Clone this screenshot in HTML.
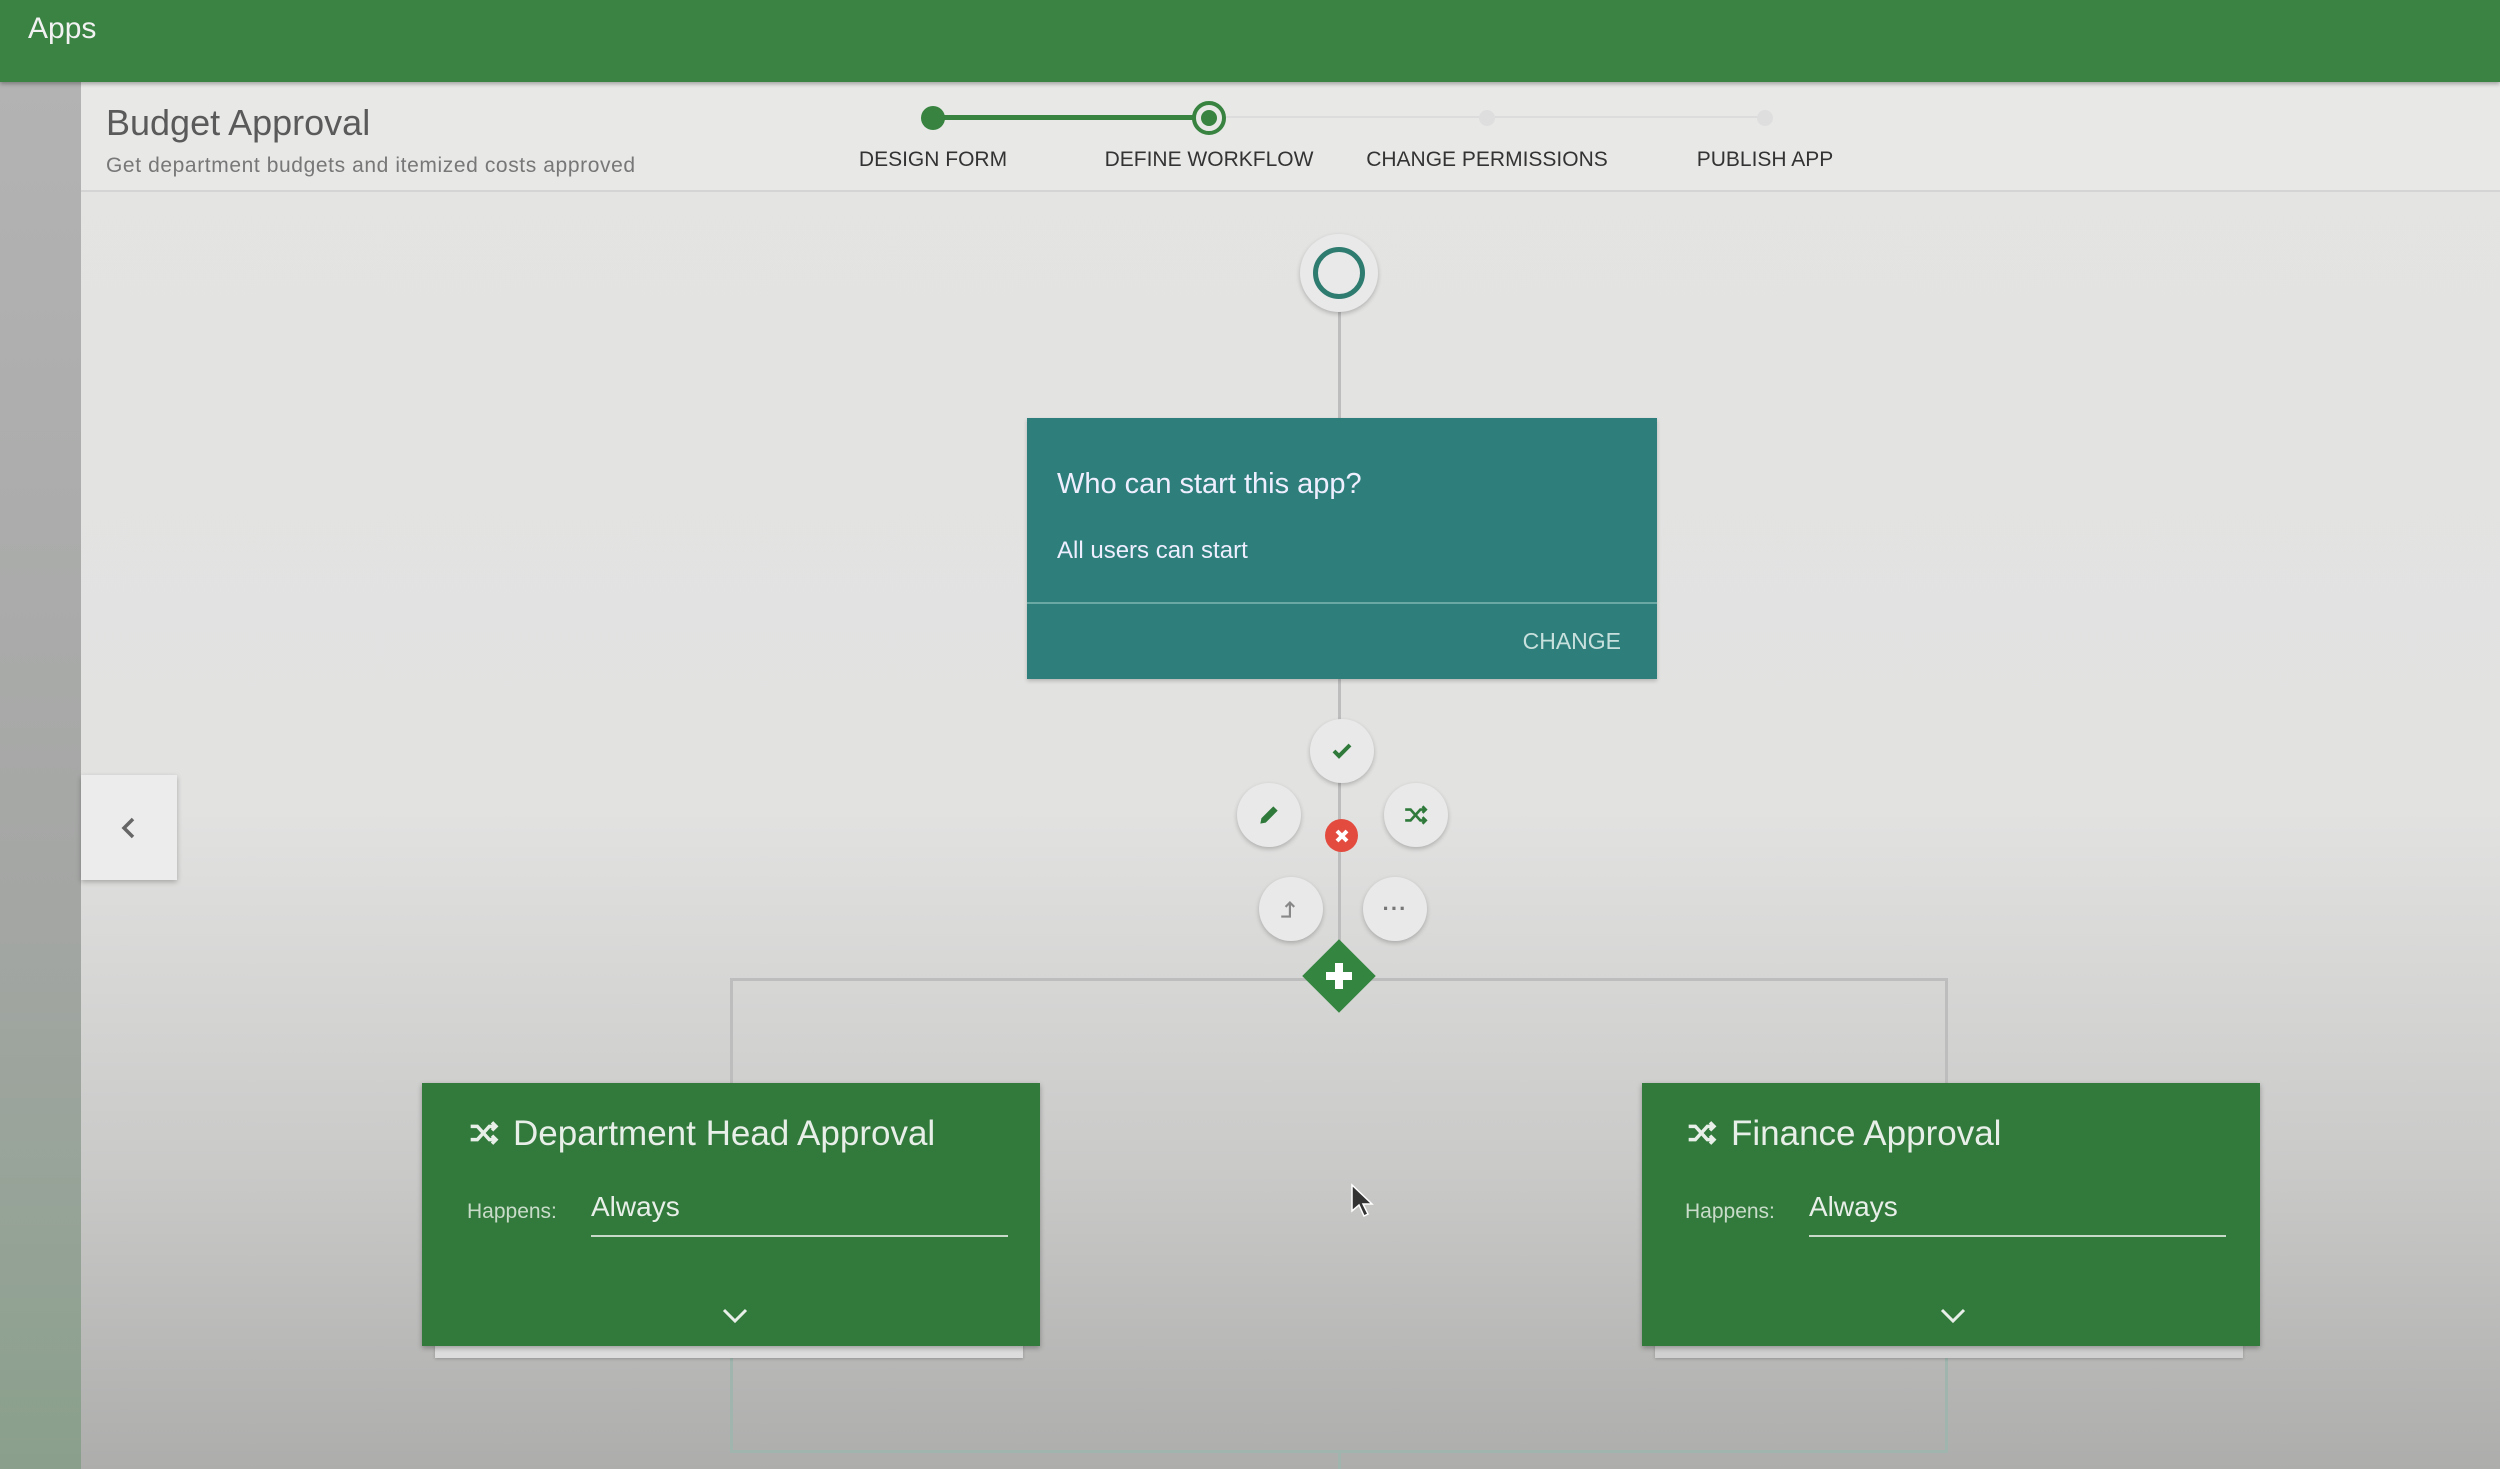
<!DOCTYPE html>
<html><head><meta charset="utf-8"><style>
*{margin:0;padding:0;box-sizing:border-box}
body{width:2500px;height:1469px;overflow:hidden;font-family:"Liberation Sans",sans-serif;position:relative;background:linear-gradient(#e4e4e3 0%,#e2e2e1 55%,#c9c9c8 80%,#adadac 100%)}
.abs{position:absolute}
#top{left:0;top:0;width:2500px;height:82px;background:#3a8343;box-shadow:0 2px 4px rgba(0,0,0,.3);z-index:3}
#left{left:0;top:82px;width:81px;height:1387px;background:linear-gradient(#b3b3b3,#a4a6a4 60%,#8aa08c)}
#hdr{left:81px;top:82px;width:2419px;height:110px;background:#e8e8e7;border-bottom:2px solid #d4d4d4}
.lbl{position:absolute;top:148px;font-size:21px;color:#333;width:300px;margin-left:-150px;text-align:center}
.line{position:absolute;background:#bdbdbd}
.fab{position:absolute;border-radius:50%;background:#e9e9e9;box-shadow:0 2px 5px rgba(0,0,0,.22);display:flex;align-items:center;justify-content:center}
.card{position:absolute;background:#32793c;box-shadow:0 2px 5px rgba(0,0,0,.3);color:#e8efe8}
</style></head><body>
<div id="top" class="abs"><div class="abs" style="left:28px;top:12px;font-size:30px;color:#f2f2f2">Apps</div></div>
<div id="left" class="abs"></div>
<div id="hdr" class="abs">
<div class="abs" style="left:25px;top:20px;font-size:36px;color:#5a5a5a">Budget Approval</div>
<div class="abs" style="left:25px;top:72px;font-size:21px;color:#777;letter-spacing:0.6px">Get department budgets and itemized costs approved</div>
</div>
<div class="abs" style="left:933px;top:116px;width:832px;height:2px;background:#dcdcdc"></div>
<div class="abs" style="left:933px;top:115px;width:276px;height:5px;background:#37833f"></div>
<div class="abs" style="left:921px;top:106px;width:24px;height:24px;border-radius:50%;background:#37833f"></div>
<div class="abs" style="left:1192px;top:101px;width:34px;height:34px;border-radius:50%;border:4px solid #37833f;background:#e8e8e7"></div>
<div class="abs" style="left:1201px;top:110px;width:16px;height:16px;border-radius:50%;background:#37833f"></div>
<div class="abs" style="left:1479px;top:110px;width:16px;height:16px;border-radius:50%;background:#dedede"></div>
<div class="abs" style="left:1757px;top:110px;width:16px;height:16px;border-radius:50%;background:#dedede"></div>
<div class="lbl" style="left:933px">DESIGN FORM</div>
<div class="lbl" style="left:1209px">DEFINE WORKFLOW</div>
<div class="lbl" style="left:1487px">CHANGE PERMISSIONS</div>
<div class="lbl" style="left:1765px">PUBLISH APP</div>
<div class="line" style="left:1338px;top:300px;width:3px;height:680px"></div>
<div class="line" style="left:730px;top:978px;width:1218px;height:3px"></div>
<div class="line" style="left:730px;top:978px;width:3px;height:110px"></div>
<div class="line" style="left:1945px;top:978px;width:3px;height:110px"></div>
<div class="line" style="left:730px;top:1350px;width:3px;height:102px;background:#9fb5ae"></div>
<div class="line" style="left:1945px;top:1350px;width:3px;height:102px;background:#9fb5ae"></div>
<div class="line" style="left:730px;top:1450px;width:1218px;height:3px;background:#9fb5ae"></div>
<div class="line" style="left:1338px;top:1450px;width:3px;height:19px;background:#9fb5ae"></div>
<div class="fab" style="left:1300px;top:234px;width:78px;height:78px"><div style="width:52px;height:52px;border-radius:50%;border:5px solid #2e7b70"></div></div>
<div class="abs" style="left:1027px;top:418px;width:630px;height:261px;background:#2e7f7b;box-shadow:0 2px 4px rgba(0,0,0,.2)">
<div class="abs" style="left:30px;top:50px;font-size:29px;color:#eef">Who can start this app?</div>
<div class="abs" style="left:30px;top:119px;font-size:24px;color:#eef">All users can start</div>
<div class="abs" style="left:0;top:184px;width:630px;height:2px;background:#6aa8a4"></div>
<div class="abs" style="right:36px;top:210px;font-size:23px;color:#c8e0dd">CHANGE</div>
</div>
<div class="fab" style="left:1310px;top:719px;width:64px;height:64px"><svg width="24" height="24" viewBox="0 0 24 24"><path d="M4 12l5 5L20 6" stroke="#2f7a3b" stroke-width="4" fill="none"/></svg></div>
<div class="fab" style="left:1237px;top:783px;width:64px;height:64px"><svg width="26" height="26" viewBox="0 0 24 24"><path d="M4 20l1-5L16 4l4 4L9 19z" fill="#2f7a3b"/></svg></div>
<div class="fab" style="left:1384px;top:783px;width:64px;height:64px"><svg width="28" height="26" viewBox="0 0 24 24" fill="none" stroke="#2f7a3b" stroke-width="2.4"><path d="M2 7h5l9 10h5M2 17h5l9-10h5M18 4l3 3-3 3M18 14l3 3-3 3"/></svg></div>
<div class="abs" style="left:1325px;top:819px;width:33px;height:33px;border-radius:50%;background:#e34b3f;display:flex;align-items:center;justify-content:center"><svg width="18" height="18" viewBox="0 0 18 18"><path d="M4 4l10 10M14 4L4 14" stroke="#fff" stroke-width="4"/></svg></div>
<div class="fab" style="left:1259px;top:877px;width:64px;height:64px"><svg width="26" height="26" viewBox="0 0 24 24" fill="none" stroke="#888" stroke-width="2"><path d="M3 19h8V6M7 10l4-4 4 4"/></svg></div>
<div class="fab" style="left:1363px;top:877px;width:64px;height:64px;color:#777;font-size:22px;font-weight:bold;letter-spacing:1px">···</div>
<div class="abs" style="left:1313px;top:950px;width:52px;height:52px;background:#348540;transform:rotate(45deg)"></div>
<svg class="abs" style="left:1321px;top:958px" width="36" height="36"><path d="M18 5v26M5 18h26" stroke="#fff" stroke-width="8"/></svg>
<div class="abs" style="left:81px;top:775px;width:96px;height:105px;background:#ececec;box-shadow:0 2px 5px rgba(0,0,0,.25);display:flex;align-items:center;justify-content:center"><svg width="20" height="26" viewBox="0 0 20 26"><path d="M14 4L5 13l9 9" stroke="#666" stroke-width="3.5" fill="none"/></svg></div>
<div class="abs" style="left:435px;top:1340px;width:588px;height:18px;background:#dcdcdc;box-shadow:0 1px 3px rgba(0,0,0,.2)"></div>
<div class="abs" style="left:1655px;top:1340px;width:588px;height:18px;background:#d0d0d0;box-shadow:0 1px 3px rgba(0,0,0,.2)"></div>
<div class="card" style="left:422px;top:1083px;width:618px;height:263px">
<svg class="abs" style="left:44px;top:34px" width="36" height="32" viewBox="0 0 24 24" fill="none" stroke="#e8efe8" stroke-width="2.6"><path d="M2 7h5l9 10h5M2 17h5l9-10h5M18 4l3 3-3 3M18 14l3 3-3 3"/></svg>
<div class="abs" style="left:91px;top:31px;font-size:35px">Department Head Approval</div>
<div class="abs" style="left:45px;top:117px;font-size:21px;color:#c9dcc9">Happens:</div>
<div class="abs" style="left:169px;top:108px;font-size:28px">Always</div>
<div class="abs" style="left:169px;top:152px;width:417px;height:2px;background:#c9d9c9"></div>
<svg class="abs" style="left:300px;top:225px" width="26" height="16"><path d="M2 2l11 11L24 2" stroke="#e8efe8" stroke-width="3" fill="none"/></svg>
</div>
<div class="card" style="left:1642px;top:1083px;width:618px;height:263px">
<svg class="abs" style="left:42px;top:34px" width="36" height="32" viewBox="0 0 24 24" fill="none" stroke="#e8efe8" stroke-width="2.6"><path d="M2 7h5l9 10h5M2 17h5l9-10h5M18 4l3 3-3 3M18 14l3 3-3 3"/></svg>
<div class="abs" style="left:89px;top:31px;font-size:35px">Finance Approval</div>
<div class="abs" style="left:43px;top:117px;font-size:21px;color:#c9dcc9">Happens:</div>
<div class="abs" style="left:167px;top:108px;font-size:28px">Always</div>
<div class="abs" style="left:167px;top:152px;width:417px;height:2px;background:#c9d9c9"></div>
<svg class="abs" style="left:298px;top:225px" width="26" height="16"><path d="M2 2l11 11L24 2" stroke="#e8efe8" stroke-width="3" fill="none"/></svg>
</div>
<svg class="abs" style="left:1350px;top:1183px" width="26" height="36" viewBox="0 0 26 36"><path d="M2 2v26l7-6 5 11 4-2-5-10h9z" fill="#333" stroke="#fff" stroke-width="1.5"/></svg>
</body></html>
